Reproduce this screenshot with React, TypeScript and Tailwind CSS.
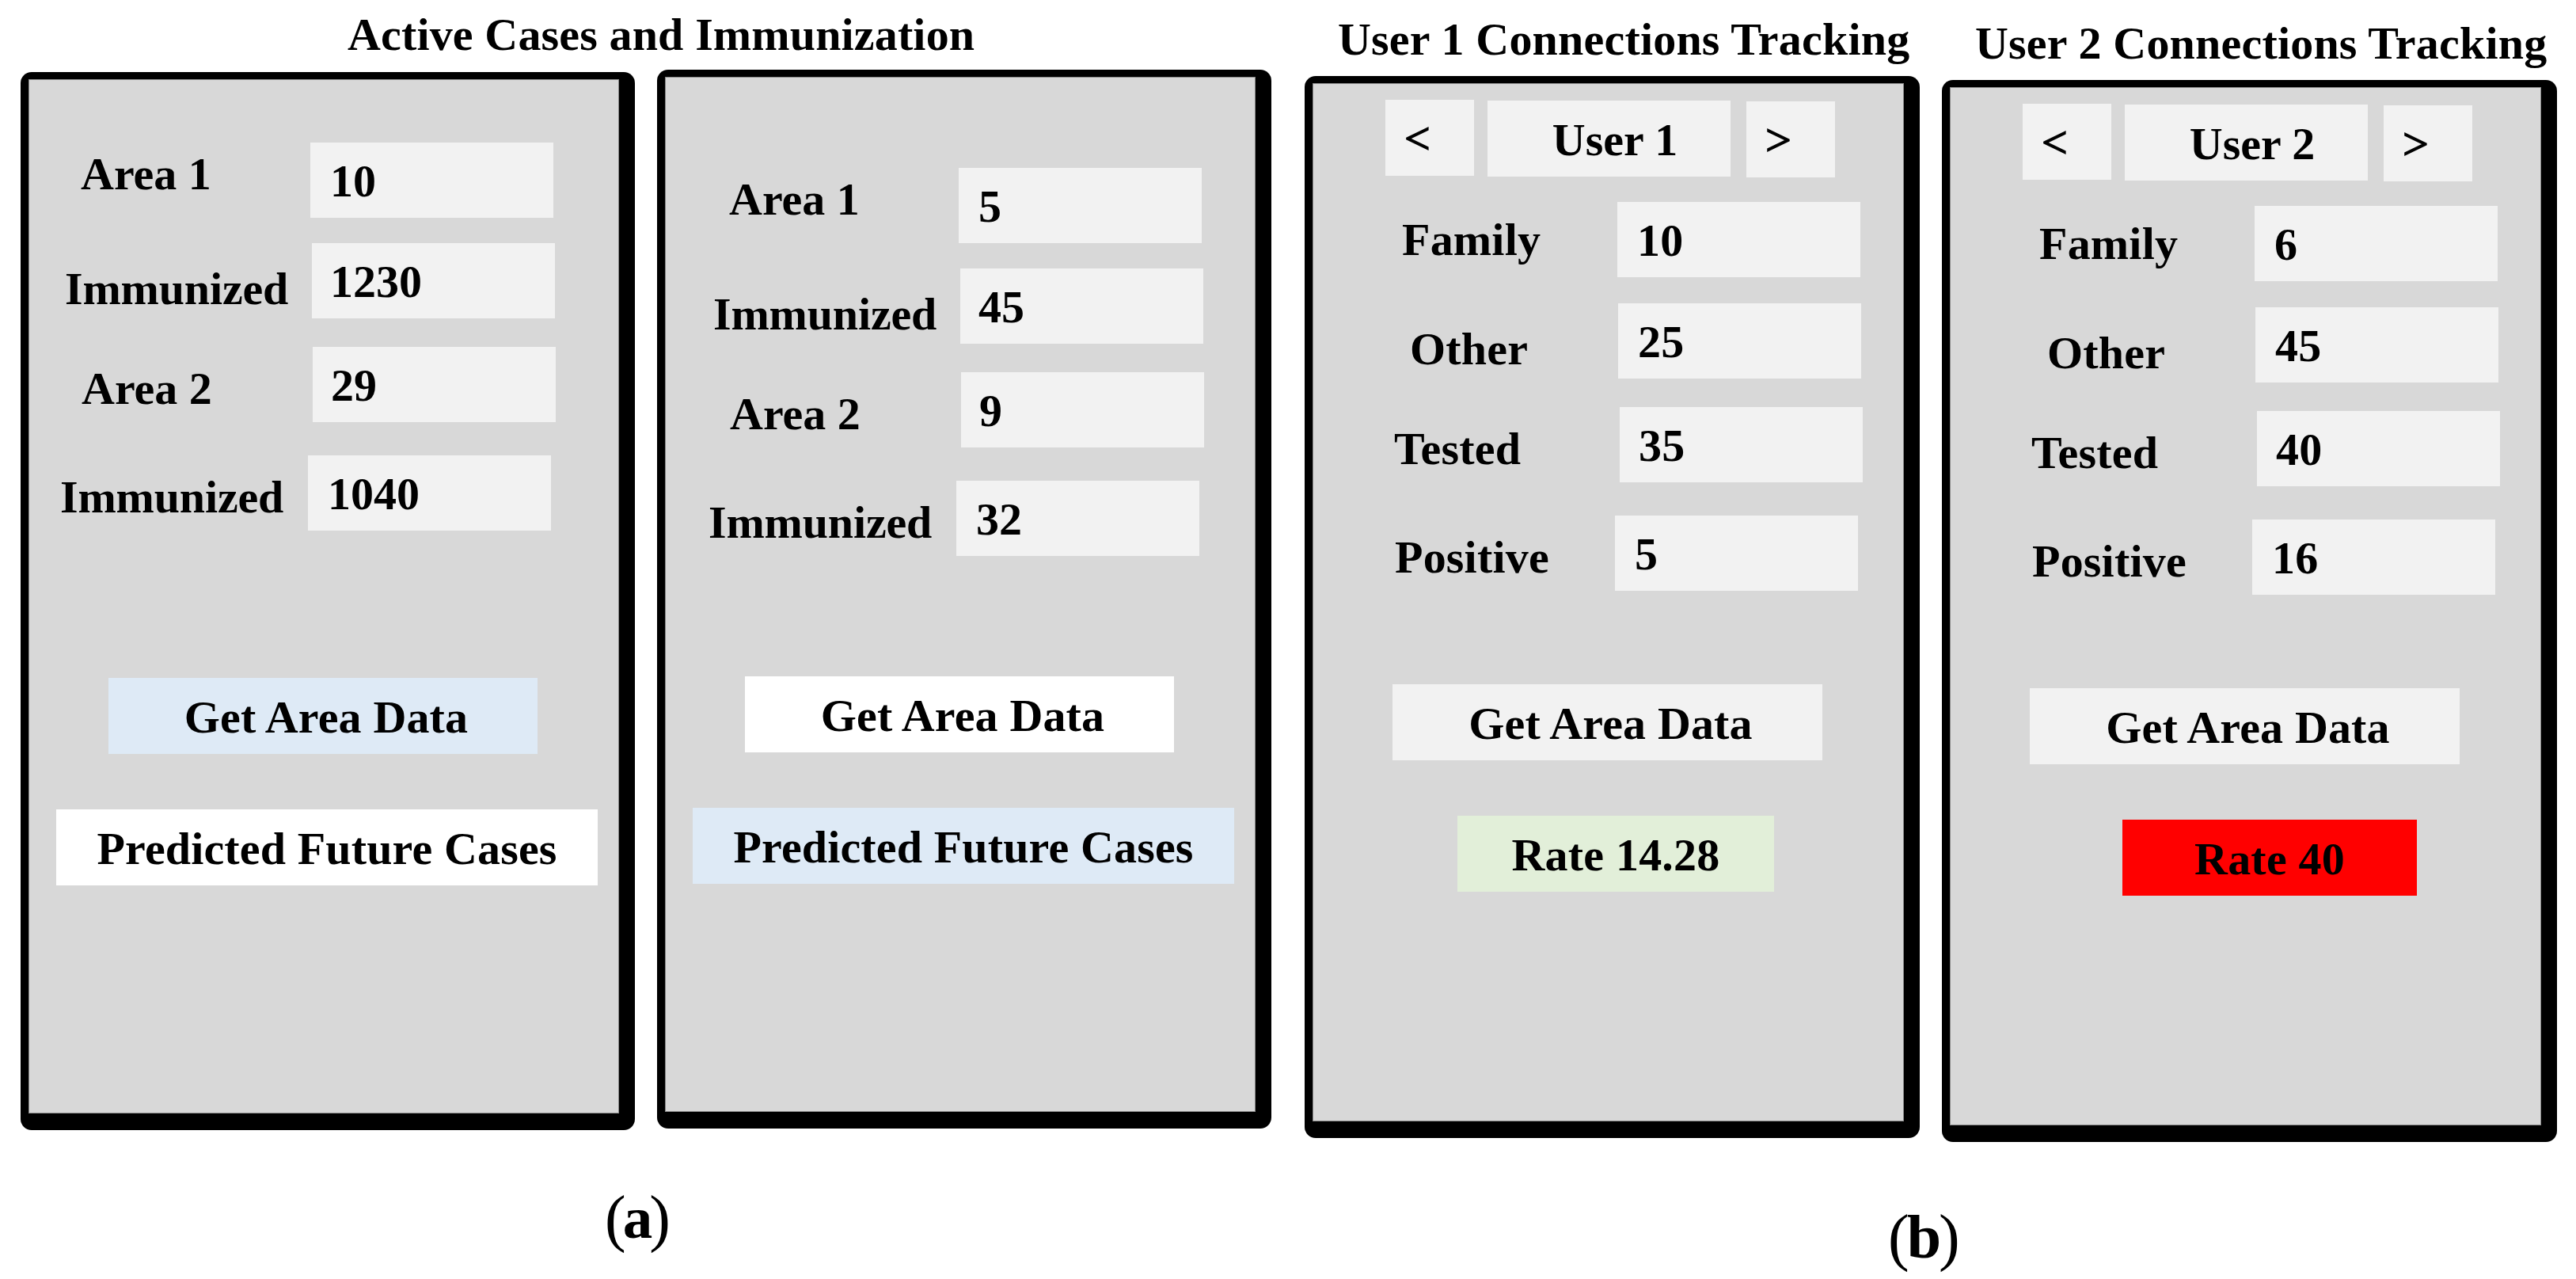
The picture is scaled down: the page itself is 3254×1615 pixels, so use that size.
import React from 'react';
import clsx from 'clsx';

type RowProps = {
  label: string;
  value: string;
  className: string;
  labelClassName: string;
  fieldClassName?: string;
};

const Row = ({ label, value, className, labelClassName, fieldClassName = 'pl-[25px]' }: RowProps) => (
  <div className={clsx('flex items-start', className)}>
    <span className={clsx('shrink-0', labelClassName)}>{label}</span>
    <div className={clsx('h-[95px] w-[307px] shrink-0 bg-[#f2f2f2] pt-5', fieldClassName)}>{value}</div>
  </div>
);

const Panel = ({ className, children }: { className: string; children: React.ReactNode }) => (
  <div className={clsx('shrink-0 rounded-[14px] bg-black pt-[9px] pl-[10px] pr-5 pb-[21px]', className)}>
    <div className="h-full w-full border border-[#8a8a8a] bg-[#d8d8d8]">{children}</div>
  </div>
);

type AreaPanelProps = {
  className: string;
  fieldsClassName: string;
  buttonsClassName: string;
  values: string[];
  getClassName: string;
  predictClassName: string;
};

const AreaPanel = ({ className, fieldsClassName, buttonsClassName, values, getClassName, predictClassName }: AreaPanelProps) => (
  <Panel className={className}>
    {/* Area fields */}
    <div className={fieldsClassName}>
      <Row label="Area 1" value={values[0]} className="h-[127px]" labelClassName="w-[355px] pl-[65px] pt-[11px]" />
      <Row
        label="Immunized"
        value={values[1]}
        className="h-[131px]"
        labelClassName="w-[357px] pl-[45px] pt-[29px] tracking-[-0.15px]"
        fieldClassName="pl-[23px]"
      />
      <Row
        label="Area 2"
        value={values[2]}
        className="h-[137px]"
        labelClassName="w-[358px] pl-[66px] pt-6"
        fieldClassName="pl-[23px]"
      />
      <Row label="Immunized" value={values[3]} className="h-24" labelClassName="w-[352px] pl-[39px] pt-6 tracking-[-0.15px]" />
    </div>

    {/* Actions */}
    <div className={clsx('tracking-[0.15px]', buttonsClassName)}>
      <div className={clsx('ml-[100px] h-24 w-[542px] pt-[21px] pl-[8px] text-center', getClassName)}>Get Area Data</div>
      <div className={clsx('ml-[34px] mt-[70px] h-24 w-[684px] pt-[21px] text-center', predictClassName)}>
        Predicted Future Cases
      </div>
    </div>
  </Panel>
);

type UserPanelProps = {
  user: string;
  values: string[];
  rate: string;
  rateClassName: string;
};

const UserPanel = ({ user, values, rate, rateClassName }: UserPanelProps) => (
  <Panel className="h-[1341px] w-[777px]">
    {/* User switcher */}
    <div className="flex items-start pl-[91px] pt-5">
      <div className="h-24 w-28 bg-[#f2f2f2] pl-6 pt-5 font-normal [-webkit-text-stroke:1.5px_black]">&lt;</div>
      <div className="ml-[17px] mt-px h-24 w-[307px] bg-[#f2f2f2] pl-[15px] pt-[21px] text-center">{user}</div>
      <div className="ml-5 mt-0.5 h-24 w-28 bg-[#f2f2f2] pl-6 pt-5 font-normal [-webkit-text-stroke:1.5px_black]">&gt;</div>
    </div>

    {/* Connections */}
    <div className="mt-[31px] tracking-[0.2px]">
      <Row label="Family" value={values[0]} className="h-[128px]" labelClassName="w-[384px] pl-[112px] pt-[19px]" />
      <Row label="Other" value={values[1]} className="h-[131px]" labelClassName="w-[385px] pl-[122px] pt-[29px]" />
      <Row
        label="Tested"
        value={values[2]}
        className="h-[137px]"
        labelClassName="w-[387px] pl-[102px] pt-6"
        fieldClassName="pl-6"
      />
      <Row label="Positive" value={values[3]} className="h-24" labelClassName="w-[381px] pl-[103px] pt-6" />
    </div>

    <div className="ml-[100px] mt-[117px] h-24 w-[543px] bg-[#f2f2f2] pl-[8px] pt-[21px] text-center tracking-[0.15px]">
      Get Area Data
    </div>
    <div className={clsx('mt-[70px] h-24 pt-[21px] text-center tracking-[0.2px]', rateClassName)}>{rate}</div>
  </Panel>
);

const Caption = ({ letter, className, letterClassName }: { letter: string; className: string; letterClassName: string }) => (
  <div className={clsx('flex text-[80px] font-normal leading-none', className)}>
    (<span className={clsx('font-bold leading-[80px]', letterClassName)}>{letter}</span>)
  </div>
);

const App = () => {
  return (
    <main
      className="flex h-[1615px] w-[3254px] items-start overflow-hidden whitespace-nowrap bg-white text-[58px] font-bold leading-none text-black"
      style={{ fontFamily: '"Liberation Serif", "Times New Roman", serif' }}
    >
      {/* Active cases */}
      <section className="w-[1648px] shrink-0 pl-[26px] pt-[15px]">
        <h2 className="pl-[413px] tracking-[0.15px]">Active Cases and Immunization</h2>
        <div className="mt-[15px] flex items-start gap-7">
          <AreaPanel
            className="mt-[3px] h-[1336px] w-[776px]"
            fieldsClassName="pt-[79px]"
            buttonsClassName="mt-[185px]"
            values={['10', '1230', '29', '1040']}
            getClassName="bg-[#deeaf6]"
            predictClassName="bg-white"
          />
          <AreaPanel
            className="h-[1337px] w-[776px]"
            fieldsClassName="pl-[15px] pt-[114px]"
            buttonsClassName="mt-[151px]"
            values={['5', '45', '9', '32']}
            getClassName="bg-white"
            predictClassName="bg-[#deeaf6]"
          />
        </div>
        <Caption letter="a" className="mt-[71px] pl-[738px]" letterClassName="-mx-1 text-[75px]" />
      </section>

      {/* Connections tracking */}
      <section className="shrink-0">
        <div className="flex items-start gap-7">
          <div className="w-[777px] pt-[21px]">
            <h2 className="mb-[17px] pl-[42px] tracking-[0.2px]">User 1 Connections Tracking</h2>
            <UserPanel user="User 1" values={['10', '25', '35', '5']} rate="Rate 14.28" rateClassName="ml-[182px] w-[400px] bg-[#e2efd9]" />
          </div>
          <div className="w-[777px] pt-[26px]">
            <h2 className="mb-[17px] pl-[42px] tracking-[0.2px]">User 2 Connections Tracking</h2>
            <UserPanel user="User 2" values={['6', '45', '40', '16']} rate="Rate 40" rateClassName="ml-[217px] w-[372px] bg-[#ff0000]" />
          </div>
        </div>
        <Caption letter="b" className="mt-[80px] pl-[737px]" letterClassName="-mx-[3px] text-[78px]" />
      </section>
    </main>
  );
};

export default App;
